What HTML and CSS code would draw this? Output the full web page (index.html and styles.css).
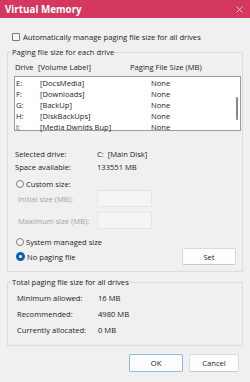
FILE: index.html
```html
<!DOCTYPE html>
<html lang="en">
<head>
    <meta charset="UTF-8">
    <meta name="viewport" content="width=device-width, initial-scale=1.0">
    <title>Virtual Memory</title>

    <link rel="stylesheet" href="styles.css">
</head>
<body>

    <div class="titlebar">
        <span class="title">Virtual Memory</span>
        <svg class="close" viewBox="0 0 8 8"><path d="M0.5 0.5 L7.5 7.5 M7.5 0.5 L0.5 7.5" stroke="#fff" stroke-width="0.8" fill="none"/></svg>
    </div>

    <div class="content">
        <div class="check-row"><span class="checkbox"></span>Automatically manage paging file size for all drives</div>

        <fieldset class="group drives">
            <legend>Paging file size for each drive</legend>

            <div class="list-head">
                <span>Drive</span><span>[Volume Label]</span><span>Paging File Size (MB)</span>
            </div>

            <div class="list">
                <div class="list-rows">
                    <div class="list-row"><span>E:</span><span>[DocsMedia]</span><span>None</span></div>
                    <div class="list-row"><span>F:</span><span>[Downloads]</span><span>None</span></div>
                    <div class="list-row"><span>G:</span><span>[BackUp]</span><span>None</span></div>
                    <div class="list-row"><span>H:</span><span>[DiskBackUps]</span><span>None</span></div>
                    <div class="list-row"><span>I:</span><span>[Media Dwnlds Bup]</span><span>None</span></div>
                </div>
                <div class="scrollbar"><div class="thumb"></div></div>
            </div>

            <div class="info">
                <span>Selected drive:</span><span>C:&nbsp; [Main Disk]</span>
                <span>Space available:</span><span>133551 MB</span>
            </div>

            <div class="radio-row custom"><span class="radio"></span>Custom size:</div>

            <div class="size-row"><span class="disabled">Initial size (MB):</span><span class="field"></span></div>
            <div class="size-row second"><span class="disabled">Maximum size (MB):</span><span class="field"></span></div>

            <div class="radio-row system"><span class="radio"></span>System managed size</div>

            <div class="nopage-row">
                <div class="radio-row"><span class="radio checked"></span>No paging file</div>
                <button class="btn set">Set</button>
            </div>
        </fieldset>

        <fieldset class="group totals">
            <legend>Total paging file size for all drives</legend>
            <div class="totals-grid">
                <span>Minimum allowed:</span><span>16 MB</span>
                <span>Recommended:</span><span>4980 MB</span>
                <span>Currently allocated:</span><span>0 MB</span>
            </div>
        </fieldset>

        <div class="actions">
            <button class="btn default">OK</button>
            <button class="btn">Cancel</button>
        </div>
    </div>

</body>
</html>
```

FILE: styles.css
```css
* {
    box-sizing: border-box;
    margin: 0;
    padding: 0;
}
body {
    width: 250px;
    height: 382px;
    background: #f0f0f0;
    font-family: "Open Sans", "Noto Sans", sans-serif;
    font-size: 7.6px;
    color: #1b1b1b;
    overflow: hidden;
}
.titlebar {
    height: 18px;
    background: #d5385e;
    color: #fff;
    display: flex;
    align-items: center;
    justify-content: space-between;
    padding: 0 7px 0 5px;
}
.title {
    font-weight: bold;
    font-size: 9.8px;
}
.close {
    width: 7px;
    height: 7px;
}
.content {
    padding: 12px 7px 0 7px;
}
.check-row {
    height: 13px;
    display: flex;
    align-items: center;
    gap: 3px;
    padding-left: 5px;
}
.checkbox {
    width: 8px;
    height: 8px;
    border: 1px solid #7a7a7a;
    border-radius: 1px;
    background: #f8f8f8;
}
.group {
    border: 1px solid #dcdcdc;
    margin-top: 4px;
}
.group legend {
    line-height: 10px;
    padding: 0 1px;
    margin-left: -3px;
}
.drives {
    padding: 4px 1px 6px 6px;
}
.list-head {
    height: 12px;
    display: grid;
    grid-template-columns: 23px 92px auto;
    align-items: center;
    padding-left: 1px;
}
.list {
    margin-top: 3px;
    height: 55px;
    border: 1px solid #9a9a9a;
    background: #fff;
    display: flex;
}
.list-rows {
    flex: 1;
}
.list-row {
    height: 11px;
    display: grid;
    grid-template-columns: 24px 111px auto;
    align-items: center;
    padding-left: 1px;
}
.scrollbar {
    width: 7px;
    padding: 20px 2px 0 3px;
}
.thumb {
    width: 2px;
    height: 23px;
    background: #8a8a8a;
    border-radius: 1px;
}
.info {
    margin-top: 16px;
    display: grid;
    grid-template-columns: 82px auto;
    grid-auto-rows: 13px;
    align-items: center;
    padding-left: 1px;
}
.radio-row {
    height: 12px;
    display: flex;
    align-items: center;
    gap: 2px;
    padding-left: 2px;
}
.custom {
    margin-top: 5px;
}
.system {
    margin-top: 7px;
}
.radio {
    width: 8px;
    height: 8px;
    border: 1px solid #7a7a7a;
    border-radius: 50%;
    background: #f8f8f8;
}
.radio.checked {
    width: 9px;
    height: 9px;
    border: 3px solid #0f5fae;
    background: #fff;
}
.size-row {
    height: 17px;
    display: grid;
    grid-template-columns: 79px 55px;
    align-items: center;
    padding-left: 4px;
}
.size-row.second {
    margin-top: 5px;
}
.disabled {
    color: #a2a2a2;
}
.field {
    height: 17px;
    border: 1px solid #e6e6e6;
    background: #f4f4f4;
}
.nopage-row {
    height: 17px;
    display: flex;
    align-items: center;
    justify-content: space-between;
    padding-right: 5px;
}
.btn {
    font-family: inherit;
    font-size: 7.6px;
    color: #1b1b1b;
    background: #fdfdfd;
    border: 1px solid #dadada;
    border-bottom-color: #c8c8c8;
    border-radius: 2px;
    height: 18px;
}
.set {
    width: 54px;
    height: 17px;
}
.totals {
    margin-top: 5px;
    padding: 3px 1px 7px 6px;
}
.totals-grid {
    display: grid;
    grid-template-columns: 81px auto;
    grid-auto-rows: 16px;
    align-items: center;
    padding-left: 3px;
}
.actions {
    margin-top: 8px;
    display: flex;
    justify-content: flex-end;
    gap: 6px;
    padding-right: 4px;
}
.actions .btn {
    width: 50px;
}
.actions .default {
    width: 54px;
    border-color: #8fb6dc;
}
```
